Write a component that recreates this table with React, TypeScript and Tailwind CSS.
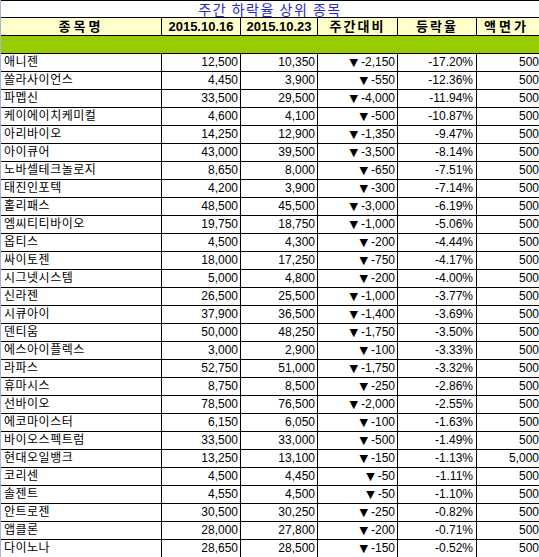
import React from "react";

type Row = [string, string, string, string, string, string];

const rows: Row[] = [
  ["애니젠", "12,500", "10,350", "-2,150", "-17.20%", "500"],
  ["쏠라사이언스", "4,450", "3,900", "-550", "-12.36%", "500"],
  ["파멥신", "33,500", "29,500", "-4,000", "-11.94%", "500"],
  ["케이에이치케미컬", "4,600", "4,100", "-500", "-10.87%", "500"],
  ["아리바이오", "14,250", "12,900", "-1,350", "-9.47%", "500"],
  ["아이큐어", "43,000", "39,500", "-3,500", "-8.14%", "500"],
  ["노바셀테크놀로지", "8,650", "8,000", "-650", "-7.51%", "500"],
  ["태진인포텍", "4,200", "3,900", "-300", "-7.14%", "500"],
  ["홀리패스", "48,500", "45,500", "-3,000", "-6.19%", "500"],
  ["엠씨티티바이오", "19,750", "18,750", "-1,000", "-5.06%", "500"],
  ["옵티스", "4,500", "4,300", "-200", "-4.44%", "500"],
  ["싸이토젠", "18,000", "17,250", "-750", "-4.17%", "500"],
  ["시그넷시스템", "5,000", "4,800", "-200", "-4.00%", "500"],
  ["신라젠", "26,500", "25,500", "-1,000", "-3.77%", "500"],
  ["시큐아이", "37,900", "36,500", "-1,400", "-3.69%", "500"],
  ["덴티움", "50,000", "48,250", "-1,750", "-3.50%", "500"],
  ["에스아이플렉스", "3,000", "2,900", "-100", "-3.33%", "500"],
  ["라파스", "52,750", "51,000", "-1,750", "-3.32%", "500"],
  ["휴마시스", "8,750", "8,500", "-250", "-2.86%", "500"],
  ["선바이오", "78,500", "76,500", "-2,000", "-2.55%", "500"],
  ["에코마이스터", "6,150", "6,050", "-100", "-1.63%", "500"],
  ["바이오스펙트럼", "33,500", "33,000", "-500", "-1.49%", "500"],
  ["현대오일뱅크", "13,250", "13,100", "-150", "-1.13%", "5,000"],
  ["코리센", "4,500", "4,450", "-50", "-1.11%", "500"],
  ["솔젠트", "4,550", "4,500", "-50", "-1.10%", "500"],
  ["안트로젠", "30,500", "30,250", "-250", "-0.82%", "500"],
  ["앱클론", "28,000", "27,800", "-200", "-0.71%", "500"],
  ["다이노나", "28,650", "28,500", "-150", "-0.52%", "500"],
];

const font = { fontFamily: '"Liberation Sans", "Noto Sans CJK KR", sans-serif' };

export default function App() {
  return (
    <div
      className="w-[539px] h-[557px] overflow-hidden bg-white text-black border-l border-l-[#a9b6d3]"
      style={font}
    >
      <div className="w-[560px]">
        {/* title */}
        <div className="h-[18px] border-y border-black flex items-center justify-center w-[538px]">
          <span className="text-[14px] leading-[16px] tracking-[1.5px] text-[#2a2ac8]" style={{ fontFamily: '"Noto Sans CJK KR", sans-serif' }}>
            주간 하락율 상위 종목
          </span>
        </div>
        {/* header */}
        <div className="grid grid-cols-[161px_79px_77px_80px_79px_1fr] h-[18px] border-b border-black bg-[#ffffcc] font-bold text-[13px] leading-[17px]">
          <div className="border-r border-black text-center tracking-[3px]">종목명</div>
          <div className="border-r border-black text-center">2015.10.16</div>
          <div className="border-r border-black text-center">2015.10.23</div>
          <div className="border-r border-black text-center tracking-[2px]">주간대비</div>
          <div className="border-r border-black text-center tracking-[2px]">등락율</div>
          <div className="text-left pl-[7px] w-[63px] tracking-[3px]">액면가</div>
        </div>
        {/* green row */}
        <div className="h-[18px] border-b border-black bg-[#99cc00]" />
        {/* data */}
        {rows.map((r, i) => (
          <div
            key={i}
            className="grid grid-cols-[161px_79px_77px_80px_79px_1fr] h-[18px] border-b border-black text-[12px] leading-[17px]"
          >
            <div className="border-r border-black pl-[3px] tracking-[0.5px] whitespace-nowrap overflow-hidden">{r[0]}</div>
            <div className="border-r border-black text-right pr-[2px]">{r[1]}</div>
            <div className="border-r border-black text-right pr-[2px]">{r[2]}</div>
            <div className="border-r border-black text-right pr-[2px] whitespace-nowrap">
              <span className="text-[11px] mr-[3px]" style={{ fontFamily: '"DejaVu Sans", sans-serif' }}>▼</span>{r[3]}
            </div>
            <div className="border-r border-black text-right pr-[3px]">{r[4]}</div>
            <div className="text-right w-[63px] pr-[1px]">{r[5]}</div>
          </div>
        ))}
      </div>
    </div>
  );
}
